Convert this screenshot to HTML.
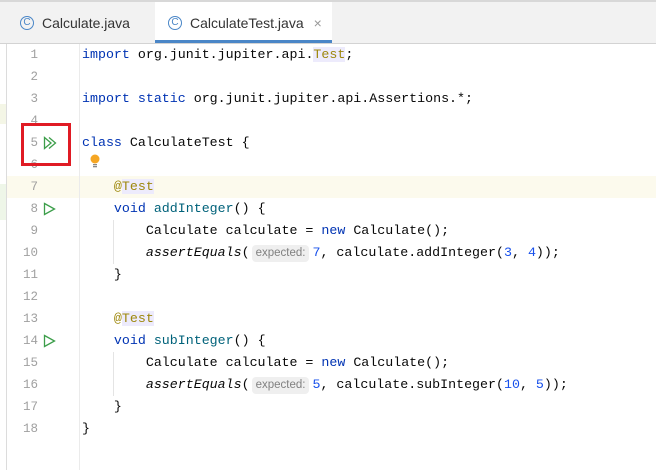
<!DOCTYPE html>
<html><head><style>
body{margin:0;width:656px;height:470px;background:#fff;position:relative;overflow:hidden;font-family:"Liberation Mono",monospace;}
.top{position:absolute;left:0;top:0;width:656px;height:2px;background:#d8d8d8}
.tabs{position:absolute;left:0;top:2px;width:656px;height:41px;background:#f2f2f2;border-bottom:1px solid #d3d3d3}
.tab{position:absolute;top:0;height:41px;font:14px "Liberation Sans",sans-serif;color:#333;display:flex;align-items:center;box-sizing:border-box}
.tab .c{display:inline-block;width:12px;height:12px;border:1.5px solid #4a86c7;border-radius:50%;color:#4a86c7;font-size:10px;line-height:12px;text-align:center;margin-right:8px}
.act{background:#fff;border-bottom:3px solid #4a86c7;padding-top:3px}
.strip{position:absolute;left:0;top:44px;width:6px;height:426px;border-right:1px solid #dcdcdc}
.gut{position:absolute;left:79px;top:44px;width:1px;height:426px;background:#ebebeb}
.cur{position:absolute;left:7px;top:176px;width:649px;height:22px;background:#fcfaed}
.ln{position:absolute;left:0;width:38px;text-align:right;font-size:12.5px;color:#a0a0a0;line-height:22px}
.code{position:absolute;left:82px;font-size:13.3px;line-height:22px;white-space:pre;color:#080808}
.k{color:#0033b3}.a{color:#9e880d}.n{color:#1750eb}.m{color:#00627a}.i{font-style:italic}
.hl{background:#edebfc}
.hint{display:inline-block;font:11.5px "Liberation Sans",sans-serif;color:#808080;background:#efefef;border-radius:4px;padding:0 4px;line-height:17px;margin:0 3px 0 2px}
.run{position:absolute;}
.box{position:absolute;left:21px;top:123px;width:44px;height:37px;border:3px solid #e01b24}
.vl{position:absolute;width:1px;background:#e4e4e4}
</style></head><body>
<div class="top"></div>
<div class="tabs">
<div class="tab" style="left:20px"><span class="c">C</span>Calculate.java</div>
<div class="tab act" style="left:155px;width:177px;padding-left:13px"><span class="c">C</span>CalculateTest.java <span style="color:#999;margin-left:10px">×</span></div>
</div>
<div class="strip"></div>
<div style="position:absolute;left:0;top:104px;width:6px;height:20px;background:#f4f6e6"></div>
<div style="position:absolute;left:0;top:184px;width:6px;height:36px;background:#eef6e8"></div>
<div class="cur"></div>
<div class="gut"></div>
<div class="vl" style="left:113px;top:220px;height:44px"></div>
<div class="vl" style="left:113px;top:352px;height:44px"></div>

<div class="ln" style="top:44px">1</div>
<div class="ln" style="top:66px">2</div>
<div class="ln" style="top:88px">3</div>
<div class="ln" style="top:110px">4</div>
<div class="ln" style="top:132px">5</div>
<div class="ln" style="top:154px">6</div>
<div class="ln" style="top:176px">7</div>
<div class="ln" style="top:198px">8</div>
<div class="ln" style="top:220px">9</div>
<div class="ln" style="top:242px">10</div>
<div class="ln" style="top:264px">11</div>
<div class="ln" style="top:286px">12</div>
<div class="ln" style="top:308px">13</div>
<div class="ln" style="top:330px">14</div>
<div class="ln" style="top:352px">15</div>
<div class="ln" style="top:374px">16</div>
<div class="ln" style="top:396px">17</div>
<div class="ln" style="top:418px">18</div>

<svg class="run" style="left:43px;top:136px" width="16" height="14"><path d="M1.5 1.5 L8 7 L1.5 12.5 Z M6 1.5 L12.5 7 L6 12.5" fill="none" stroke="#3c9e4a" stroke-width="1.3"/></svg>
<svg class="run" style="left:43px;top:202px" width="14" height="14"><path d="M1.5 1.5 L11.5 7 L1.5 12.5 Z" fill="none" stroke="#3c9e4a" stroke-width="1.3"/></svg>
<svg class="run" style="left:43px;top:334px" width="14" height="14"><path d="M1.5 1.5 L11.5 7 L1.5 12.5 Z" fill="none" stroke="#3c9e4a" stroke-width="1.3"/></svg>
<div class="box"></div>
<svg style="position:absolute;left:89px;top:153px" width="12" height="16"><circle cx="6" cy="6" r="4.5" fill="#f5a623"/><rect x="4" y="11" width="4" height="1.3" fill="#888"/><rect x="4" y="13" width="4" height="1.3" fill="#888"/></svg>

<div class="code" style="top:44px"><span class="k">import</span> org.junit.jupiter.api.<span class="a hl">Test</span>;</div>
<div class="code" style="top:88px"><span class="k">import static</span> org.junit.jupiter.api.Assertions.*;</div>
<div class="code" style="top:132px"><span class="k">class</span> CalculateTest {</div>
<div class="code" style="top:176px">    <span class="a">@<span class="hl">Test</span></span></div>
<div class="code" style="top:198px">    <span class="k">void</span> <span class="m">addInteger</span>() {</div>
<div class="code" style="top:220px">        Calculate calculate = <span class="k">new</span> Calculate();</div>
<div class="code" style="top:242px">        <span class="i">assertEquals</span>(<span class="hint">expected:</span><span class="n">7</span>, calculate.addInteger(<span class="n">3</span>, <span class="n">4</span>));</div>
<div class="code" style="top:264px">    }</div>
<div class="code" style="top:308px">    <span class="a">@<span class="hl">Test</span></span></div>
<div class="code" style="top:330px">    <span class="k">void</span> <span class="m">subInteger</span>() {</div>
<div class="code" style="top:352px">        Calculate calculate = <span class="k">new</span> Calculate();</div>
<div class="code" style="top:374px">        <span class="i">assertEquals</span>(<span class="hint">expected:</span><span class="n">5</span>, calculate.subInteger(<span class="n">10</span>, <span class="n">5</span>));</div>
<div class="code" style="top:396px">    }</div>
<div class="code" style="top:418px">}</div>
</body></html>
